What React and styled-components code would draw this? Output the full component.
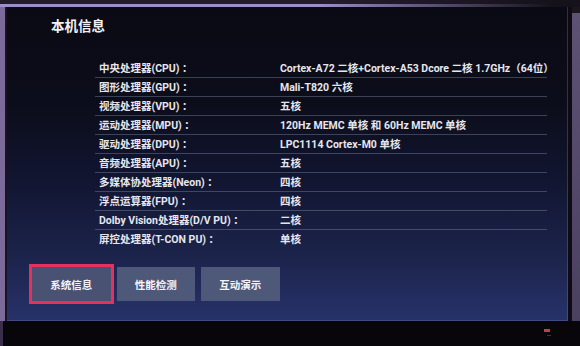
import React from "react";
import styled, { createGlobalStyle } from "styled-components";

const Global = createGlobalStyle`
  html, body { margin: 0; padding: 0; background: #0a080e; }
  body { width: 580px; height: 346px; overflow: hidden; }
`;

const Stage = styled.div`
  width: 580px;
  height: 346px;
  display: flex;
  flex-direction: column;
  background: #0a080e;
  font-family: Roboto, "Noto Sans CJK SC", sans-serif;
`;

const TopStrip = styled.div`
  height: 7px;
  flex: none;
  background:
    linear-gradient(90deg, rgba(20, 16, 26, 0) 0%, rgba(20, 16, 26, 0) 55%, #16121c 95%),
    linear-gradient(180deg, #231c2c 0 4px, #9c8ec6 4px 7px);
`;

const Middle = styled.div`
  display: flex;
  height: 314px;
  flex: none;
`;

const SideStrip = styled.div`
  flex: none;
  width: ${(p) => p.$w}px;
  background: ${(p) => p.$bg};
`;

const Screen = styled.div`
  width: 561px;
  flex: none;
  display: flex;
  flex-direction: column;
  background: linear-gradient(
    180deg,
    #0a0a14 0%,
    #0c0d1a 30%,
    #111530 55%,
    #1c244c 80%,
    #27326a 100%
  );
  box-shadow: inset -1px -1px 0 rgba(120, 120, 170, 0.35);
`;

const Title = styled.div`
  padding: 10px 0 0 44px;
  line-height: 18px;
  font-size: 13.5px;
  font-weight: 700;
  color: #f2f2f6;
`;

const Table = styled.div`
  margin: 23.5px 0 0 88px;
  width: 452px;
  display: flex;
  flex-direction: column;
`;

const Row = styled.div`
  display: grid;
  grid-template-columns: 185px 1fr;
  height: 19px;
  box-sizing: border-box;
  align-items: center;
  border-bottom: 1px solid ${(p) => (p.$last ? "transparent" : "rgba(140, 150, 185, 0.38)")};
  font-size: 10.5px;
  font-weight: 700;
  color: #e6e6ee;
  white-space: nowrap;
`;

const Label = styled.span`
  padding-left: 4px;
`;

const Value = styled.span``;

const Buttons = styled.div`
  display: flex;
  gap: 6px;
  margin: 18.5px 0 0 25px;
`;

const Btn = styled.div`
  width: 78.5px;
  height: 34px;
  display: flex;
  align-items: center;
  justify-content: center;
  background: ${(p) => (p.$active ? "#4a5274" : "#4e5878")};
  color: #f4f4f8;
  font-size: 10.5px;
  font-weight: 700;
  outline: ${(p) => (p.$active ? "3px solid #e5315c" : "none")};
`;

const Bezel = styled.div`
  flex: 1;
  display: flex;
  justify-content: flex-end;
  align-items: flex-start;
  padding: 8px 30px 0 0;
  background: linear-gradient(90deg, #3a2e4a 0 3px, #08060b 3px);
`;

const Logo = styled.div`
  width: 6px;
  height: 3px;
  background: #c0404a;
  box-shadow: 2px 5px 0 -1px #3a3440;
`;

const rows = [
  ["中央处理器(CPU) ：", "Cortex-A72 二核+Cortex-A53 Dcore 二核 1.7GHz（64位）"],
  ["图形处理器(GPU) ：", "Mali-T820 六核"],
  ["视频处理器(VPU) ：", "五核"],
  ["运动处理器(MPU) ：", "120Hz MEMC 单核 和 60Hz MEMC 单核"],
  ["驱动处理器(DPU) ：", "LPC1114 Cortex-M0 单核"],
  ["音频处理器(APU) ：", "五核"],
  ["多媒体协处理器(Neon) ：", "四核"],
  ["浮点运算器(FPU) ：", "四核"],
  ["Dolby Vision处理器(D/V PU) ：", "二核"],
  ["屏控处理器(T-CON PU) ：", "单核"],
];

export default function App() {
  return (
    <>
      <Global />
      <Stage>
        <TopStrip />
        <Middle>
          <SideStrip $w={5} $bg="#7c6a9a" />
          <SideStrip $w={2} $bg="#1a1420" />
          <Screen>
            <Title>本机信息</Title>
            <Table>
              {rows.map(([l, v], i) => (
                <Row key={i} $last={i === rows.length - 1}>
                  <Label>{l}</Label>
                  <Value>{v}</Value>
                </Row>
              ))}
            </Table>
            <Buttons>
              <Btn $active>系统信息</Btn>
              <Btn>性能检测</Btn>
              <Btn>互动演示</Btn>
            </Buttons>
          </Screen>
          <SideStrip $w={4} $bg="#0e0b14" />
          <SideStrip $w={8} $bg="linear-gradient(180deg, #1a1620 0 6px, #5e5274 6px, #4a4060 100%)" />
        </Middle>
        <Bezel>
          <Logo />
        </Bezel>
      </Stage>
    </>
  );
}
